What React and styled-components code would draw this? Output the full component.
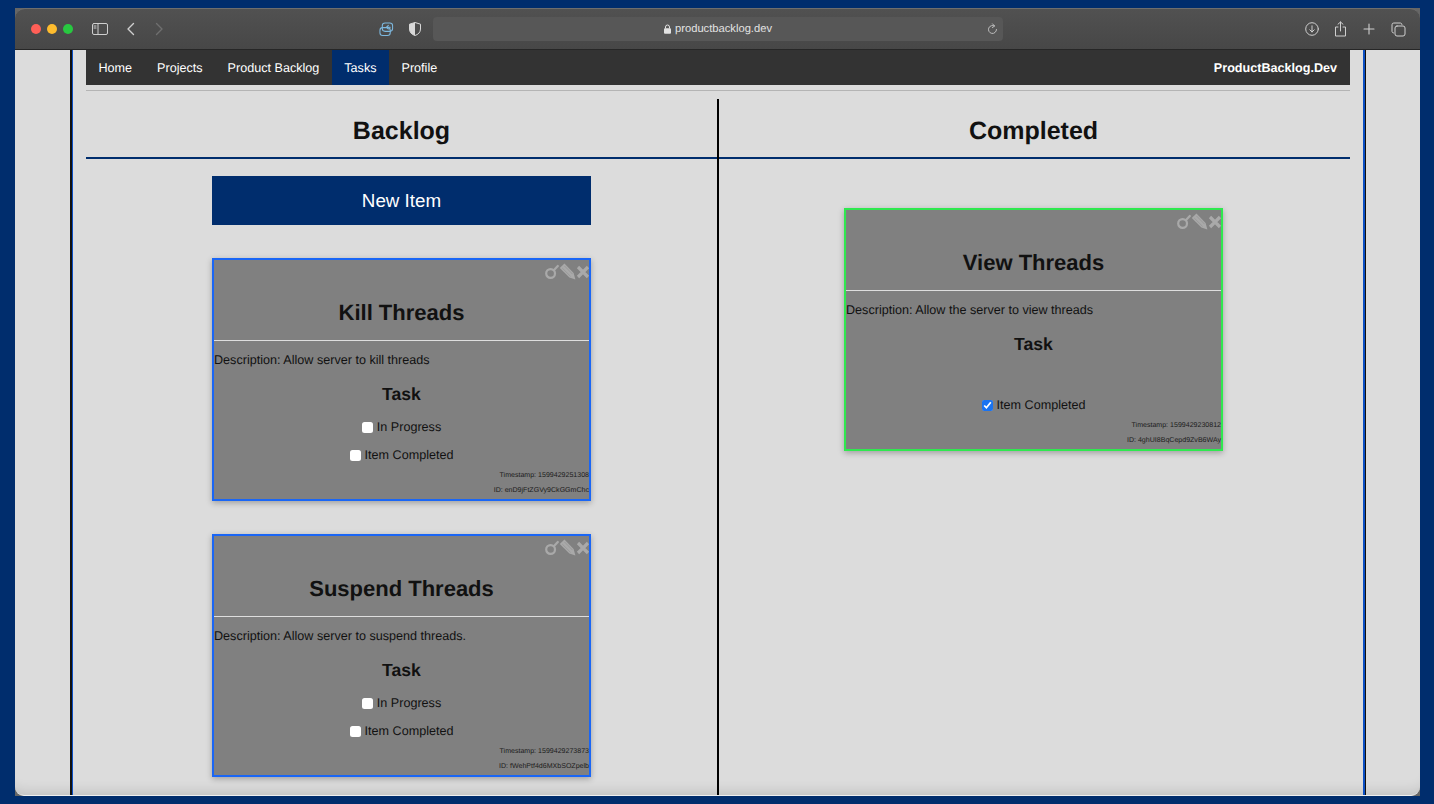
import React from 'react'
import styled, {createGlobalStyle} from 'styled-components'

const Global = createGlobalStyle`
html, body {
  margin: 0;
  height: 100%;
  overflow: hidden;
  background: #002d6d;
  font-family: "Liberation Sans", Arial, sans-serif;
  text-rendering: geometricPrecision;
}
#root {
  height: 100%;
}
`
const Desktop = styled.div`
box-sizing: border-box;
height: 804px;
padding: 8px 14px 8px 15px;
`
const Win = styled.div`
height: 788px;
display: flex;
flex-direction: column;
background: #666;
`
const TitleBar = styled.div`
box-sizing: border-box;
height: 42px;
flex: none;
display: flex;
align-items: center;
padding: 0 8px 0 16px;
background: linear-gradient(180deg, #515151, #474747);
border-top: 1px solid #6e6e6e;
border-bottom: 1px solid #262626;
border-radius: 10px 10px 0 0;
`
const Lights = styled.div`
display: flex;
gap: 6px;
margin-right: 14px;
`
const Light = styled.span`
width: 10px;
height: 10px;
border-radius: 50%;
background: ${p => p.color};
`
const Slot = styled.div`
width: ${p => p.w || 28}px;
height: 28px;
flex: none;
display: flex;
align-items: center;
justify-content: center;
color: ${p => p.color || '#cfcfcf'};
`
const Group = styled.div`
display: flex;
align-items: center;
margin-left: ${p => p.ml || 0};
gap: ${p => p.gap || 0}px;
`
const UrlBar = styled.div`
width: 570px;
height: 24px;
margin-left: 4px;
display: grid;
grid-template-columns: 1fr auto 1fr;
align-items: center;
background: #575757;
border-radius: 4px;
color: #e2e2e2;
font-size: 11.2px;
`
const UrlText = styled.div`
grid-column: 2;
display: flex;
align-items: center;
gap: 4px;
`
const Reload = styled.div`
justify-self: end;
display: flex;
margin-right: 5px;
color: #bdbdbd;
`
const Viewport = styled.div`
flex: 1;
min-height: 0;
overflow: hidden;
background: #dcdcdc;
border-bottom: 1px solid #f0f0f0;
border-radius: 0 0 9px 9px;
padding: 0 54px 0 55px;
box-shadow: inset 0 -14px 14px -12px rgba(0, 0, 0, 0.14);
`
const Rail = styled.div`
height: 100%;
border-left: 2px solid #111;
border-right: 1px solid #111;
`
const Page = styled.div`
box-sizing: border-box;
height: 100%;
padding: 0 13px;
border-left: 1px solid #0b4fc4;
border-right: 2px solid #0b4fc4;
display: flex;
flex-direction: column;
`
const Nav = styled.nav`
height: 35px;
flex: none;
display: flex;
align-items: stretch;
background: #333;
color: #fff;
font-size: 12.6px;
`
const NavLink = styled.a`
display: flex;
align-items: center;
padding: 0 12.5px;
background: ${p => (p.active ? '#002d6d' : 'transparent')};
`
const Brand = styled.div`
margin-left: auto;
display: flex;
align-items: center;
padding-right: 13px;
font-weight: bold;
`
const Rule = styled.div`
height: 1px;
flex: none;
margin: 5px 0 8px;
background: #b4b4b4;
`
const Board = styled.div`
flex: 1;
min-height: 0;
display: flex;
`
const Column = styled.section`
flex: 1;
min-width: 0;
display: flex;
flex-direction: column;
align-items: center;
`
const Divider = styled.div`
width: 2px;
flex: none;
background: #000;
`
const ColumnTitle = styled.h1`
align-self: stretch;
box-sizing: border-box;
height: 60px;
flex: none;
margin: 0;
padding: 18px ${p => p.nudge || 0}px 0 0;
border-bottom: 2px solid #002d6d;
text-align: center;
font-size: 25px;
line-height: 29px;
font-weight: bold;
color: #111;
`
const NewItem = styled.button`
width: 379px;
height: 49px;
flex: none;
margin: 17px 0 33px;
border: 0;
background: #002d6d;
color: #fff;
font: 18.8px "Liberation Sans", Arial, sans-serif;
`
const Card = styled.article`
position: relative;
box-sizing: border-box;
width: 379px;
height: 243px;
flex: none;
margin: ${p => p.mt || 0}px ${p => p.nudge || 0}px 33px 0;
background: #808080;
border: 2px solid ${p => p.accent};
box-shadow: 0 2px 6px rgba(0, 0, 0, 0.28);
color: #111;
`
const CardTools = styled.div`
position: absolute;
top: 3px;
right: -1px;
display: flex;
color: #a9a9a9;
`
const CardTitle = styled.h2`
margin: 0;
padding: 41px 0 15px;
font-size: 22px;
line-height: 24px;
font-weight: bold;
text-align: center;
`
const CardRule = styled.div`
height: 1px;
background: #dedede;
`
const Description = styled.div`
margin-top: 9px;
font-size: 12.6px;
line-height: 20px;
`
const TaskTitle = styled.h3`
margin: 13px 0 0;
font-size: 17.6px;
line-height: 22px;
font-weight: bold;
text-align: center;
`
const Options = styled.div`
height: 48px;
margin-top: 12px;
display: flex;
flex-direction: column;
justify-content: flex-end;
gap: 8px;
`
const Option = styled.label`
height: 20px;
display: flex;
align-items: center;
justify-content: center;
font-size: 12.6px;
`
const Check = styled.input`
width: 11px;
height: 11px;
margin: 0 4px 0 0;
accent-color: #1a73f0;
&:not(:checked) {
  appearance: none;
  background: #fff;
  border-radius: 2.5px;
}
`
const Meta = styled.div`
height: 15px;
font-size: 7.05px;
line-height: 15px;
text-align: right;
white-space: nowrap;
color: #1c1c1c;
`
const Stamp = styled(Meta)`
margin-top: 3px;
`

const Stroke = ({w = 16, h = 16, vb = '0 0 16 16', sw = 1.2, children}) => (
  <svg width={w} height={h} viewBox={vb} fill="none" stroke="currentColor" strokeWidth={sw} strokeLinecap="round" strokeLinejoin="round">
    {children}
  </svg>
)

const Tools = () => (
  <CardTools>
    <svg width="14" height="17" viewBox="0 0 14 17" fill="none" stroke="currentColor" strokeWidth="2.2">
      <circle cx="5.6" cy="10.5" r="4.4" />
      <path d="M8.8 7.2 L12.8 3" strokeLinecap="round" />
    </svg>
    <svg width="17" height="17" viewBox="0 0 17 17" fill="currentColor">
      <path d="M5.4 0.4 L0.8 5 L10.4 14.4 L16.4 16.4 L14.6 10 Z" />
      <path d="M3.2 5 L11.6 13.4 M5.4 2.9 L13.6 11.2" stroke="#8e8e8e" strokeWidth="0.6" fill="none" />
    </svg>
    <svg width="14" height="17" viewBox="0 0 14 17" stroke="currentColor" strokeWidth="3.2">
      <path d="M2 4 L12 14 M12 4 L2 14" />
    </svg>
  </CardTools>
)

const ItemCard = ({title, desc, accent, stamp, id, done, mt, nudge}) => (
  <Card accent={accent} mt={mt} nudge={nudge}>
    <Tools />
    <CardTitle>{title}</CardTitle>
    <CardRule />
    <Description>Description: {desc}</Description>
    <TaskTitle>Task</TaskTitle>
    <Options>
      {!done && (
        <Option><Check type="checkbox" />In Progress</Option>
      )}
      <Option><Check type="checkbox" defaultChecked={done} />Item Completed</Option>
    </Options>
    <Stamp>Timestamp: {stamp}</Stamp>
    <Meta>ID: {id}</Meta>
  </Card>
)

export default function App() {
  return (
    <Desktop>
      <Global />
      <Win>
        <TitleBar>
          <Lights>
            <Light color="#ff5f57" />
            <Light color="#febc2e" />
            <Light color="#28c840" />
          </Lights>
          <Slot w={26}>
            <Stroke w={16} h={12} vb="0 0 16 12" sw={1}>
              <rect x="0.5" y="0.5" width="15" height="11" rx="1.5" />
              <path d="M6 0.5 V11.5 M2 3 H4 M2 5 H4" />
            </Stroke>
          </Slot>
          <Group ml="4px">
            <Slot>
              <Stroke w={10} h={14} vb="0 0 10 14" sw={1.4}><path d="M7.5 1.5 L2 7 L7.5 12.5" /></Stroke>
            </Slot>
            <Slot color="#6f6f6f">
              <Stroke w={10} h={14} vb="0 0 10 14" sw={1.4}><path d="M2.5 1.5 L8 7 L2.5 12.5" /></Stroke>
            </Slot>
          </Group>
          <Group ml="199px" gap={1}>
            <Slot color="#7db9e0">
              <Stroke w={15} h={15} sw={1.1}>
                <rect x="3.5" y="1" width="11" height="9" rx="3" />
                <rect x="1" y="6" width="11" height="8.5" rx="3" />
                <path d="M12 5.5 H8 M8 5.5 L10 3.5 M8 5.5 L10 7.5" />
              </Stroke>
            </Slot>
            <Slot color="#d8d8d8">
              <svg width="12" height="14" viewBox="0 0 12 14">
                <path d="M6 0.5 L11.5 2.2 V7 C11.5 10.4 9 12.6 6 13.5 C3 12.6 0.5 10.4 0.5 7 V2.2 Z" fill="none" stroke="currentColor" />
                <path d="M6 0.5 L0.5 2.2 V7 C0.5 10.4 3 12.6 6 13.5 Z" fill="currentColor" />
              </svg>
            </Slot>
          </Group>
          <UrlBar>
            <UrlText>
              <svg width="7" height="10" viewBox="0 0 7 10">
                <path d="M1.5 4.5 V3 A2 2 0 0 1 5.5 3 V4.5" fill="none" stroke="currentColor" />
                <rect x="0" y="4.2" width="7" height="5.6" rx="1" fill="currentColor" />
              </svg>
              productbacklog.dev
            </UrlText>
            <Reload>
              <Stroke w={11} h={12} vb="0 0 11 12" sw={1}>
                <path d="M7.5 3 A4 4 0 1 0 9.5 6.5 M5.5 0.8 L7.6 3 L5.4 4.6" />
              </Stroke>
            </Reload>
          </UrlBar>
          <Group ml="auto" gap={0.67}>
            <Slot>
              <Stroke w={14} h={14} vb="0 0 14 14" sw={1}>
                <circle cx="7" cy="7" r="6.3" />
                <path d="M7 3.8 V10 M4.8 7.8 L7 10 L9.2 7.8" />
              </Stroke>
            </Slot>
            <Slot>
              <Stroke w={13} h={16} vb="0 0 13 16" sw={1}>
                <path d="M4 6 H1.5 V15 H11.5 V6 H9 M6.5 10 V1 M4 3.2 L6.5 1 L9 3.2" />
              </Stroke>
            </Slot>
            <Slot>
              <Stroke w={12} h={12} vb="0 0 12 12" sw={1.1}><path d="M6 1 V11 M1 6 H11" /></Stroke>
            </Slot>
            <Slot>
              <Stroke w={15} h={15} vb="0 0 15 15" sw={1}>
                <rect x="4" y="4" width="10" height="10" rx="2" />
                <path d="M11 2.5 A1.8 1.8 0 0 0 9.4 1 H2.8 A1.8 1.8 0 0 0 1 2.8 V9.4 A1.8 1.8 0 0 0 2.5 11" />
              </Stroke>
            </Slot>
          </Group>
        </TitleBar>
        <Viewport>
          <Rail>
            <Page>
              <Nav>
                <NavLink>Home</NavLink>
                <NavLink>Projects</NavLink>
                <NavLink>Product Backlog</NavLink>
                <NavLink active>Tasks</NavLink>
                <NavLink>Profile</NavLink>
                <Brand>ProductBacklog.Dev</Brand>
              </Nav>
              <Rule />
              <Board>
                <Column>
                  <ColumnTitle>Backlog</ColumnTitle>
                  <NewItem>New Item</NewItem>
                  <ItemCard
                    title="Kill Threads"
                    desc="Allow server to kill threads"
                    accent="#1a66f5"
                    stamp="1599429251308"
                    id="enD9jFtZGVy9CkGGmChc"
                  />
                  <ItemCard
                    title="Suspend Threads"
                    desc="Allow server to suspend threads."
                    accent="#1a66f5"
                    stamp="1599429273873"
                    id="fWehPtf4d6MXbSOZpelb"
                  />
                </Column>
                <Divider />
                <Column>
                  <ColumnTitle nudge={2}>Completed</ColumnTitle>
                  <ItemCard
                    title="View Threads"
                    desc="Allow the server to view threads"
                    accent="#2fe84f"
                    stamp="1599429230812"
                    id="4ghUI8BqCepd9ZvB6WAy"
                    done
                    mt={49}
                    nudge={2}
                  />
                </Column>
              </Board>
            </Page>
          </Rail>
        </Viewport>
      </Win>
    </Desktop>
  )
}
